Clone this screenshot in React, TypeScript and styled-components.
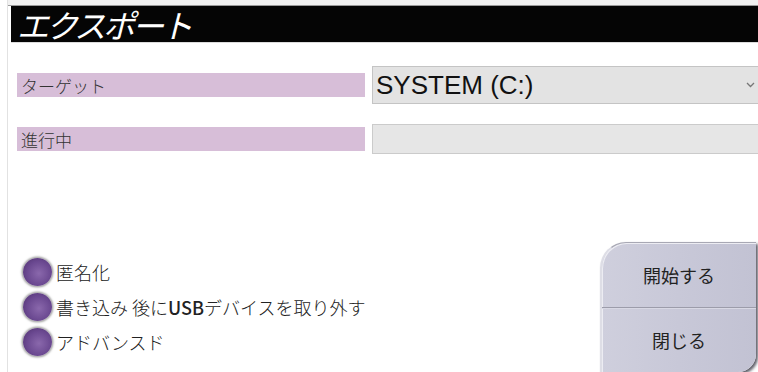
import React from "react";
import styled, { createGlobalStyle } from "styled-components";

const GlobalStyle = createGlobalStyle`
  html, body { margin: 0; padding: 0; background: #ffffff; }
  body { font-family: "Noto Sans CJK JP", "Noto Sans", sans-serif; }
  * { box-sizing: border-box; }
`;

const Frame = styled.div`
  margin-left: 7px;
  height: 372px;
  border-left: 1px solid #e2e2e2;
  display: flex;
  flex-direction: column;
  overflow: hidden;
`;

const TopStrip = styled.div`
  height: 6px;
  background: #f1f1f1;
  border-bottom: 1px solid #9a9a9a;
`;

const Header = styled.div`
  height: 37px;
  margin-left: 3px;
  background: #050505;
  border-bottom: 1px solid #dcdcdc;
  display: flex;
  align-items: center;
  padding-left: 6px;
`;

const Title = styled.h1`
  margin: 0;
  font-family: "Noto Sans CJK JP", sans-serif;
  font-style: italic;
  font-weight: 400;
  font-size: 32px;
  line-height: 1;
  color: #ffffff;
  letter-spacing: -3px;
`;

const Form = styled.div`
  margin-top: 23px;
  padding-left: 9px;
  display: flex;
  flex-direction: column;
  gap: 20px;
`;

const Row = styled.div<{ $h: number }>`
  display: grid;
  grid-template-columns: 348px 1fr;
  column-gap: 7px;
  align-items: center;
  height: ${(p) => p.$h}px;
`;

const Label = styled.div`
  height: 24px;
  background: #d7bed8;
  color: #333333;
  font-size: 17px;
  font-weight: 300;
  display: flex;
  align-items: center;
  padding-left: 4px;
  font-family: "Noto Sans CJK JP", sans-serif;
`;

const Select = styled.div`
  height: 38px;
  background: #e3e3e3;
  border: 1px solid #c4c4c4;
  border-right: none;
  display: flex;
  align-items: center;
  justify-content: space-between;
  padding: 0 3px 0 3px;
`;

const SelectText = styled.span`
  font-family: "Liberation Sans", Arial, sans-serif;
  font-size: 26px;
  color: #111111;
  line-height: 1;
`;

const Field = styled.div`
  height: 30px;
  background: #e6e6e6;
  border: 1px solid #cbcbcb;
  border-right: none;
`;

const Bottom = styled.div`
  margin-top: auto;
  height: 130px;
  display: flex;
  align-items: flex-end;
`;

const Options = styled.div`
  flex: 1;
  display: flex;
  flex-direction: column;
  padding-left: 15px;
  padding-bottom: 13px;
`;

const Option = styled.div`
  height: 35px;
  display: flex;
  align-items: center;
  gap: 4px;
`;

const OptionText = styled.span`
  color: #222222;
  font-size: 18px;
  font-weight: 300;
  font-family: "Noto Sans CJK JP", sans-serif;
  white-space: nowrap;
`;

const Strong = styled.span`
  font-weight: 500;
`;

const Radio = styled.span`
  width: 29px;
  height: 28px;
  border-radius: 50%;
  flex: none;
  background: radial-gradient(circle at 55% 55%, #8a68ac 0%, #6a4890 55%, #4c2e6a 100%);
  box-shadow: 0 0 2px 1.5px rgba(110, 110, 110, 0.6);
`;

const ButtonPanel = styled.div`
  width: 156px;
  height: 130px;
  margin-right: 2px;
  display: flex;
  flex-direction: column;
  border-radius: 26px 0 18px 0;
  background: linear-gradient(90deg, #cfcfdd 0%, #c8c8d8 50%, #c2c2d3 100%);
  border-top: 1px solid #a8a8b4;
  border-left: 2px solid #dedee6;
  box-shadow: 2px 2px 3px #5e5e68, inset 1px 1px 0 #ececf2;
  overflow: hidden;
`;

const PanelButton = styled.button<{ $first?: boolean }>`
  flex: 1;
  border: none;
  background: transparent;
  font-family: "Noto Sans CJK JP", sans-serif;
  font-size: 18px;
  font-weight: 400;
  color: #222222;
  border-top: ${(p) => (p.$first ? "none" : "1px solid #9c9caa")};
  box-shadow: ${(p) => (p.$first ? "none" : "inset 0 1px 0 #d8d8e4")};
  padding: 0;
  cursor: pointer;
`;

const Chevron = () => (
  <svg width="9" height="6" viewBox="0 0 9 6">
    <path d="M1 1 L4.5 4.5 L8 1" fill="none" stroke="#777" strokeWidth="1.3" />
  </svg>
);

export default function App() {
  return (
    <>
      <GlobalStyle />
      <Frame>
        <TopStrip />
        <Header>
          <Title>エクスポート</Title>
        </Header>
        <Form>
          <Row $h={38}>
            <Label>ターゲット</Label>
            <Select>
              <SelectText>SYSTEM (C:)</SelectText>
              <Chevron />
            </Select>
          </Row>
          <Row $h={30}>
            <Label>進行中</Label>
            <Field />
          </Row>
        </Form>
        <Bottom>
          <Options>
            <Option>
              <Radio />
              <OptionText>匿名化</OptionText>
            </Option>
            <Option>
              <Radio />
              <OptionText>
                書き込み 後に<Strong>USB</Strong>デバイスを取り外す
              </OptionText>
            </Option>
            <Option>
              <Radio />
              <OptionText>アドバンスド</OptionText>
            </Option>
          </Options>
          <ButtonPanel>
            <PanelButton $first>開始する</PanelButton>
            <PanelButton>閉じる</PanelButton>
          </ButtonPanel>
        </Bottom>
      </Frame>
    </>
  );
}
